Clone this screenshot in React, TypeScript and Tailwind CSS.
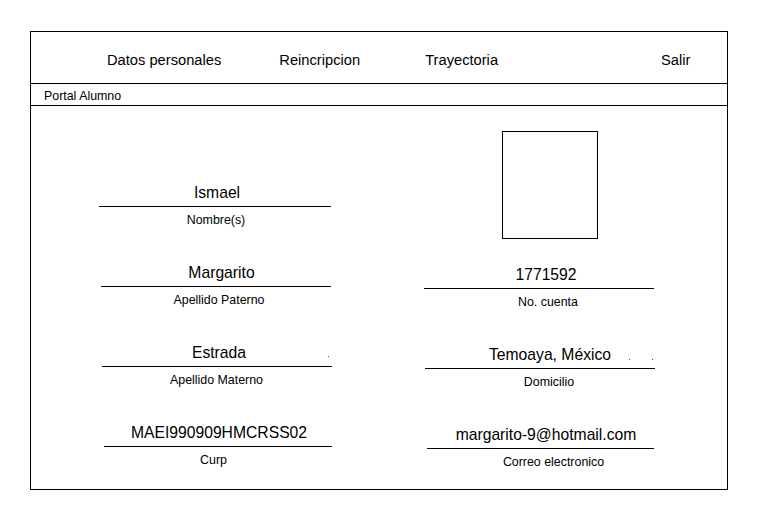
import React from 'react';

// Alumno profile wireframe
const NAV = [
    { label: 'Datos personales', cls: 'ml-0' },
    { label: 'Reincripcion', cls: 'ml-[58px]' },
    { label: 'Trayectoria', cls: 'ml-[65px]' },
    { label: 'Salir', cls: 'ml-[163px]' },
];

interface FieldProps {
    value: string;
    label: string;
    lineCls: string;
    valueCls?: string;
    labelCls?: string;
    dots?: string[];
}

const Field: React.FC<FieldProps> = ({ value, label, lineCls, valueCls = '', labelCls = '', dots = [] }) => (
    <div className="flex flex-col">
        <div className={`relative text-center text-[15.7px] leading-[18px] pb-[4px] ${valueCls}`}>
            {value}
            {dots.map((d) => (
                <span key={d} className={`absolute w-px h-px bg-[#555] ${d}`}></span>
            ))}
        </div>
        <div className={`h-px bg-black ${lineCls}`}></div>
        <div className={`text-center text-[12.4px] leading-[14px] mt-[6px] ${labelCls}`}>{label}</div>
    </div>
);

export default function App() {
    return (
        <div className="w-[770px] h-[525px] bg-white text-black pt-[31px] pl-[30px]" style={{ fontFamily: '"Liberation Sans", Arial, sans-serif' }}>
            <div className="w-[698px] h-[459px] border border-black flex flex-col">
                {/* Header nav */}
                <div className="h-[52px] border-b border-black pt-[19px] pl-[76px] flex text-[14.7px] leading-[18px]">
                    {NAV.map((n) => (
                        <span key={n.label} className={n.cls}>{n.label}</span>
                    ))}
                </div>
                <div className="h-[22px] border-b border-black pt-[5px] pl-[13px] text-[12.4px] leading-[14px]">
                    Portal Alumno
                </div>

                {/* Content */}
                <div className="flex">
                    <div className="ml-[68px] w-[240px] pt-[78px] flex flex-col gap-[37px]">
                        <Field value="Ismael" label="Nombre(s)" lineCls="ml-0 w-[232px]" valueCls="pr-[4px]" labelCls="pr-[6px]" />
                        <Field value="Margarito" label="Apellido Paterno" lineCls="ml-[2px] w-[230px]" valueCls="pl-[5px]" />
                        <Field value="Estrada" label="Apellido Materno" lineCls="ml-[3px] w-[230px]" labelCls="pr-[5px]" dots={['left-[229px] top-[12px]']} />
                        <Field value="MAEI990909HMCRSS02" label="Curp" lineCls="ml-[5px] w-[228px]" labelCls="pr-[11px]" />
                    </div>
                    <div className="ml-[85px] w-[248px] flex flex-col">
                        <div className="mt-[25px] ml-[78px] w-[96px] h-[108px] border border-black"></div>
                        <div className="mt-[27px] flex flex-col gap-[37px]">
                            <Field value="1771592" label="No. cuenta" lineCls="ml-0 w-[230px]" valueCls="pr-[4px]" />
                            <Field value="Temoaya, México" label="Domicilio" lineCls="ml-[1px] w-[230px]" valueCls="pl-[4px]" labelCls="pl-[2px]" dots={['left-[205px] top-[13px]', 'left-[228px] top-[13px]']} />
                            <Field value="margarito-9@hotmail.com" label="Correo electronico" lineCls="ml-[3px] w-[227px]" valueCls="pr-[4px]" labelCls="pl-[11px]" />
                        </div>
                    </div>
                </div>
            </div>
        </div>
    );
}
